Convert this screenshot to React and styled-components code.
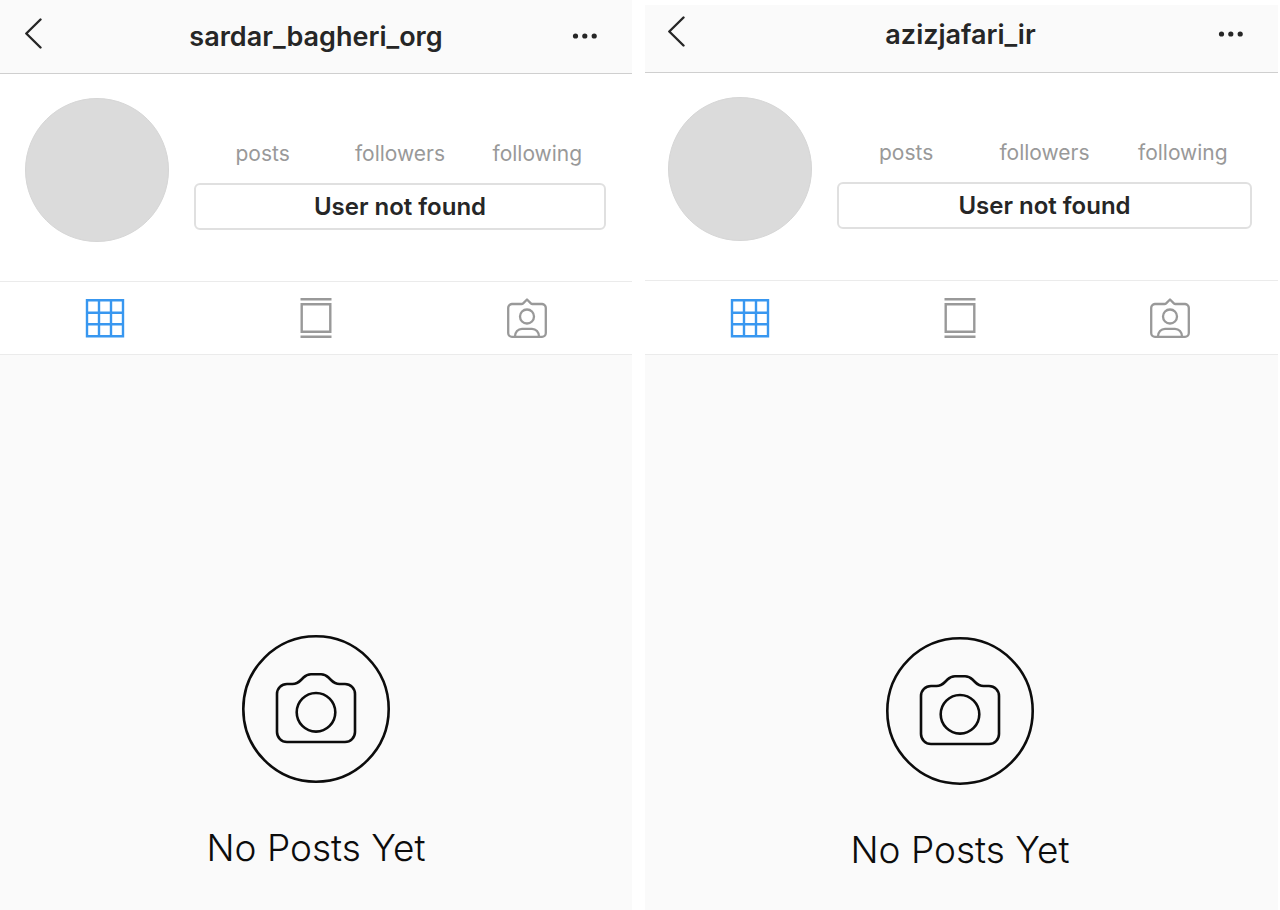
import React from "react";
import styled, { createGlobalStyle } from "styled-components";

const GlobalStyle = createGlobalStyle`
  * { box-sizing: border-box; }
  body {
    margin: 0;
    background: #fff;
    color: #262626;
    font-family: Inter, "Liberation Sans", sans-serif;
  }
  h1, h2, dl, dt { margin: 0; font-weight: inherit; }
  button {
    margin: 0;
    padding: 0;
    border: 0;
    background: none;
    color: inherit;
    font: inherit;
    cursor: pointer;
  }
  svg { display: block; }
`;

const Page = styled.main`
  display: grid;
  grid-template-columns: 632fr 633fr;
  gap: 13px;
  min-height: 100vh;
  padding-right: 2px;
`;

const Screen = styled.section`
  display: flex;
  flex-direction: column;
  min-width: 0;
  background: #fafafa;
`;

const Header = styled.header`
  display: grid;
  grid-template-columns: 1fr auto 1fr;
  align-items: center;
  height: ${(p) => (p.$inset ? 73 : 74)}px;
  padding: 0 24px ${(p) => (p.$inset ? 8 : 0)}px ${(p) => (p.$inset ? 22 : 24)}px;
  border-top: ${(p) => (p.$inset ? 5 : 0)}px solid #fff;
  border-bottom: 1px solid #cfcfcf;
`;

const Username = styled.h1`
  font-size: 27px;
  line-height: 36px;
  font-weight: 600;
`;

const HeaderButton = styled.button`
  justify-self: ${(p) => p.$side};
  padding-right: ${(p) => (p.$side === "end" ? 10 : 0)}px;
`;

const Profile = styled.div`
  display: flex;
  gap: 25px;
  height: 207px;
  padding: 24px 26px 0 ${(p) => (p.$inset ? 23 : 25)}px;
  background: #fff;
`;

const Avatar = styled.div`
  flex: none;
  width: 144px;
  height: 144px;
  border: 1px solid #d6d6d6;
  border-radius: 50%;
  background: #dbdbdb;
`;

const Details = styled.div`
  flex: 1;
  display: flex;
  flex-direction: column;
  justify-content: flex-end;
  gap: 15px;
  height: 132px;
`;

const Stats = styled.dl`
  display: grid;
  grid-template-columns: repeat(3, 1fr);
`;

const StatLabel = styled.dt`
  color: #999;
  font-size: 21px;
  line-height: 28px;
  text-align: center;
`;

const StatusButton = styled.button`
  height: 47px;
  border: 2px solid #e0e0e0;
  border-radius: 6px;
  font-size: 24px;
  font-weight: 600;
`;

const Tabs = styled.nav`
  display: grid;
  grid-template-columns: repeat(3, 1fr);
  height: ${(p) => (p.$inset ? 75 : 74)}px;
  padding-right: ${(p) => (p.$inset ? 3 : 0)}px;
  border-top: 1px solid #ebebeb;
  border-bottom: 1px solid #ebebeb;
  background: #fff;
`;

const Tab = styled.button`
  display: flex;
  align-items: center;
  justify-content: center;
  color: ${(p) => (p.$active ? "#3897f0" : "#999")};
`;

const Empty = styled.div`
  flex: 1;
  display: flex;
  flex-direction: column;
  align-items: center;
  gap: 41px;
  padding: ${(p) => (p.$inset ? "282px 3px 24px 0" : "280px 0 24px")};
  color: #0c0c0c;
`;

const EmptyTitle = styled.h2`
  font-size: 37px;
  line-height: 48px;
  font-weight: 300;
`;

const BackIcon = () => (
  <svg width="18" height="37" viewBox="0 0 18 37" fill="none" stroke="currentColor" strokeWidth="2.4" strokeLinecap="round" strokeLinejoin="round" aria-hidden="true">
    <path d="M16.500 1.500 2.300 15.500 16.500 29.500" />
  </svg>
);

const MoreIcon = () => (
  <svg width="26" height="8" viewBox="0 0 26 8" fill="currentColor" aria-hidden="true">
    <circle cx="3.5" cy="3" r="2.6" />
    <circle cx="12.8" cy="3" r="2.6" />
    <circle cx="22.2" cy="3" r="2.6" />
  </svg>
);

const GridIcon = () => (
  <svg width="40" height="40" viewBox="0 0 40 40" fill="none" stroke="currentColor" strokeWidth="2.4" aria-hidden="true">
    <path d="M2 2.2h36v36H2zM14 2.2v36M26 2.2v36M2 14.700h36M2 26.200h36" />
  </svg>
);

const FeedIcon = () => (
  <svg width="40" height="40" viewBox="0 0 40 40" fill="none" stroke="currentColor" strokeWidth="2.4" aria-hidden="true">
    <path d="M4.500 1.200h31M5.700 6.200h28.600v27.600H5.700zM4.500 38.700h31" />
  </svg>
);

const TaggedIcon = () => (
  <svg width="40" height="40" viewBox="0 0 40 40" fill="none" stroke="currentColor" strokeWidth="2.3" strokeLinejoin="round" aria-hidden="true">
    <path d="M4.800 6H14.600c.8 0 1.200-.3 1.800-.9L20 1.500l3.600 3.600c.6.6 1 .9 1.800.9h9.800a3.800 3.800 0 0 1 3.600 3.800v25.200a3.800 3.800 0 0 1-3.800 3.800H5A3.800 3.800 0 0 1 1.200 35V9.800A3.800 3.800 0 0 1 4.800 6Z" />
    <circle cx="20" cy="18.500" r="7" />
    <path d="M8 38.500c0-4.500 3-7.700 7-7.700h10c4 0 7 3.200 7 7.700" />
  </svg>
);

const CameraIcon = () => (
  <svg width="148" height="148" viewBox="0 0 148 148" fill="none" stroke="currentColor" strokeWidth="2.6" strokeLinejoin="round" aria-hidden="true">
    <circle cx="74" cy="74" r="72.700" />
    <path d="M45 49H50.500C54.500 49 56.500 47.500 59 45L61.500 42.500C64 40 66 39.200 69 39.200H79C82 39.200 84 40 86.500 42.500L89 45C91.500 47.500 93.500 49 97.500 49H103A10 10 0 0 1 113 59V97A10 10 0 0 1 103 107H45A10 10 0 0 1 35 97V59A10 10 0 0 1 45 49Z" />
    <circle cx="74" cy="77.300" r="19.300" />
  </svg>
);

function ProfileScreen({ username, inset }) {
  return (
    <Screen aria-label={username}>
      <Header $inset={inset}>
        <HeaderButton type="button" $side="start" aria-label="Back">
          <BackIcon />
        </HeaderButton>
        <Username>{username}</Username>
        <HeaderButton type="button" $side="end" aria-label="More options">
          <MoreIcon />
        </HeaderButton>
      </Header>
      <Profile $inset={inset}>
        <Avatar />
        <Details>
          <Stats>
            <StatLabel>posts</StatLabel>
            <StatLabel>followers</StatLabel>
            <StatLabel>following</StatLabel>
          </Stats>
          <StatusButton type="button">User not found</StatusButton>
        </Details>
      </Profile>
      <Tabs $inset={inset} aria-label="Profile views">
        <Tab type="button" $active aria-label="Grid">
          <GridIcon />
        </Tab>
        <Tab type="button" aria-label="Feed">
          <FeedIcon />
        </Tab>
        <Tab type="button" aria-label="Tagged">
          <TaggedIcon />
        </Tab>
      </Tabs>
      <Empty $inset={inset}>
        <CameraIcon />
        <EmptyTitle>No Posts Yet</EmptyTitle>
      </Empty>
    </Screen>
  );
}

export default function App() {
  return (
    <>
      <GlobalStyle />
      <Page>
        <ProfileScreen username="sardar_bagheri_org" />
        <ProfileScreen username="azizjafari_ir" inset />
      </Page>
    </>
  );
}
